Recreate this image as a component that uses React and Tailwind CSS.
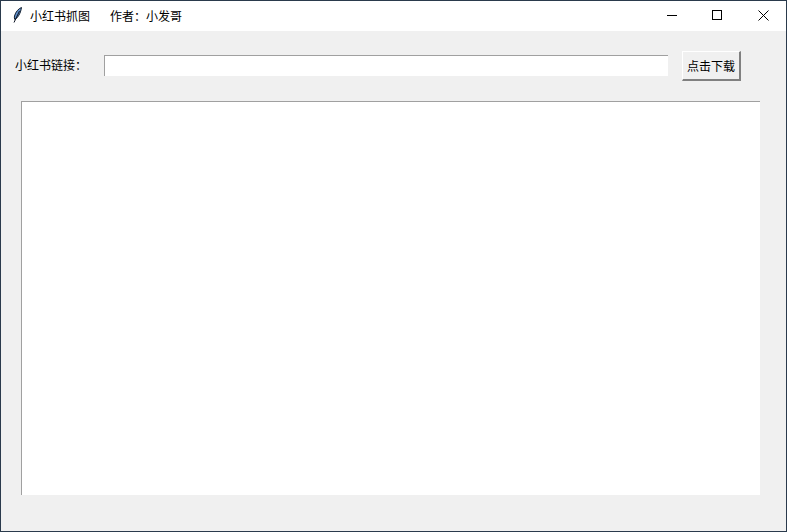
export default function App() {
  return (
    <div className="w-[787px] h-[532px] flex flex-col overflow-hidden border border-[#2a3a4c] bg-[#f0f0f0] text-[12px] leading-none text-black font-['Noto_Sans_CJK_SC','Noto_Sans',sans-serif]">
      {/* title bar */}
      <div className="h-[30px] shrink-0 flex items-center bg-white">
        <svg className="ml-[12px] mb-[2px] w-[10px] h-[16px]" viewBox="0 0 10 16">
          <path d="M8.5 0.5C5.5 1.5 2.5 5 1.5 9C1.2 10.5 1.3 11.5 1.8 12.5C4.5 11 7.5 7 8.5 0.5Z" fill="#5f8fcb" stroke="#14202f" strokeWidth="1" />
          <path d="M6.5 4L1 15.5" stroke="#0b1220" strokeWidth="1" fill="none" />
        </svg>
        <span className="ml-[7px]">小红书抓图</span>
        <span className="ml-[20px]">作者：小发哥</span>
        <div className="ml-auto flex h-full pb-[2px]">
          <div className="w-[46px] pl-[2px] flex items-center justify-center">
            <svg width="10" height="10" viewBox="0 0 10 10"><path d="M0 5.5H10" stroke="#000" strokeWidth="1" /></svg>
          </div>
          <div className="w-[46px] flex items-center justify-center">
            <svg width="10" height="10" viewBox="0 0 10 10"><rect x="0.5" y="0.5" width="9" height="9" fill="none" stroke="#000" strokeWidth="1" /></svg>
          </div>
          <div className="w-[46px] flex items-center justify-center">
            <svg width="11" height="11" viewBox="0 0 11 11"><path d="M0.5 0.5L10.5 10.5M10.5 0.5L0.5 10.5" stroke="#000" strokeWidth="1" fill="none" /></svg>
          </div>
        </div>
      </div>
      {/* link row */}
      <div className="mt-[20px] flex items-center h-[30px] shrink-0">
        <span className="ml-[14px] mb-[2px] w-[89px]">小红书链接：</span>
        <input className="mb-[1px] w-[564px] h-[21px] bg-white border-t border-l border-[#a0a0a0] outline-none" />
        <button className="ml-[14px] w-[59px] h-[30px] flex items-center justify-center bg-[#f0f0f0] border-t border-l border-white border-r-2 border-b-2 border-r-[#808080] border-b-[#808080]">
          点击下载
        </button>
      </div>
      {/* text area */}
      <div className="mt-[20px] ml-[20px] w-[739px] h-[394px] shrink-0 bg-white border-t border-l border-[#a0a0a0]" />
    </div>
  );
}
